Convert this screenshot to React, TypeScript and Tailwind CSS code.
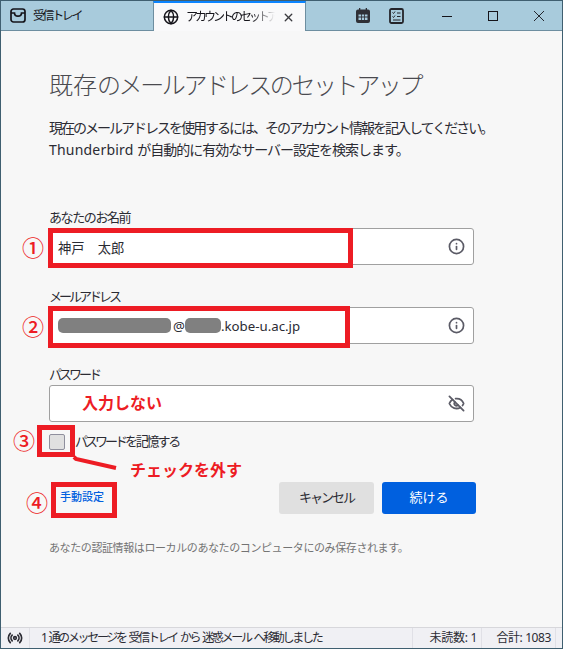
import { Info, EyeOff, X, Globe, Radio } from 'lucide-react';

const fontStack = "font-['Noto_Sans','Noto_Sans_CJK_JP',sans-serif]";

const InboxIcon = () => (
  <svg width="16" height="15" viewBox="0 0 16 15" fill="none" stroke="#15141a" strokeWidth="1.7">
    <rect x="1" y="1" width="14" height="13" rx="2.500" />
    <path d="M1 5h3.500c0 2 1.400 3.200 3.500 3.200S11.500 7 11.500 5H15" />
  </svg>
);

const CalendarIcon = () => (
  <svg width="14" height="15" viewBox="0 0 14 15" fill="#2f3036">
    <path d="M3 0h1.300v2H3zM9.700 0H11v2H9.700z" />
    <path fillRule="evenodd" d="M2 1.500h10A2 2 0 0 1 14 3.500v9.500a2 2 0 0 1-2 2H2a2 2 0 0 1-2-2V3.500a2 2 0 0 1 2-2zM2.500 6.500v2h2.500v-2zm3.300 0v2h2.400v-2zm3.200 0v2h2.500v-2zM2.500 9.500v2.500h2.500V9.500zm3.300 0v2.500h2.400V9.500zm3.200 0v2.500h2.500V9.500z" />
  </svg>
);

const TasksIcon = () => (
  <svg width="15" height="16" viewBox="0 0 15 16" fill="none" stroke="#24252a">
    <rect x="1" y="1" width="13" height="14" rx="1.500" strokeWidth="1.800" />
    <path d="M3.500 4.500l1 1 1.500-2M3.500 8.500l1 1 1.500-2M8 5h3.500M8 8.500h3.500M4 12h7.500" strokeWidth="1" />
  </svg>
);

const WinMin = () => (
  <svg width="10" height="10" viewBox="0 0 10 10" stroke="#15141a">
    <path d="M0 5.500h10" />
  </svg>
);

const WinMax = () => (
  <svg width="10" height="10" viewBox="0 0 10 10" fill="none" stroke="#15141a">
    <rect x="0.500" y="0.500" width="9" height="9" />
  </svg>
);

const WinClose = () => (
  <svg width="10" height="10" viewBox="0 0 10 10" stroke="#15141a" strokeWidth="0.900">
    <path d="M0 0l10 10M10 0L0 10" />
  </svg>
);

const Field = ({ label, children, icon }: { label: React.ReactNode; children?: React.ReactNode; icon: React.ReactNode }) => (
  <div>
    <div className="h-[20px] whitespace-nowrap text-[13px] leading-[19px] text-[#2b2b33]">{label}</div>
    <div className="flex h-[37px] items-center justify-between rounded-[3px] border border-[#a0a0a0] bg-white pl-[8px] pr-[8px]">
      <div className="flex items-center text-[13.250px] text-[#2b2b33]">{children}</div>
      {icon}
    </div>
  </div>
);

export default function App() {
  return (
    <div className={`relative flex h-[649px] w-[563px] flex-col overflow-hidden border border-[#3f5f70] bg-[#f7f7f7] ${fontStack}`}>
      {/* tab bar */}
      <div className="flex h-[30px] shrink-0 items-stretch border-b border-[#6d8ea0] bg-[#a8cbdc]">
        <div className="flex w-[152px] items-center pl-[9px] text-[12px] text-[#15141a]">
          <InboxIcon />
          <span className="ml-[7px] tracking-[-2.400px]">受信トレイ</span>
        </div>
        <div className="-mb-px flex w-[153px] items-center border-x border-t-2 border-x-[#6d8ea0] border-t-[#0a84ff] bg-[#f9f9fa] pl-[9px] text-[12px] text-[#15141a]">
          <Globe size={16} strokeWidth={2.200} className="shrink-0" />
          <span className="ml-[7px] w-[89px] overflow-hidden whitespace-nowrap tracking-[-3px] [mask-image:linear-gradient(to_right,black_75%,transparent)]">
            アカウントのセットアップ
          </span>
          <X size={13} strokeWidth={2.500} className="ml-[7px] shrink-0 text-[#3a3a3f]" />
        </div>
        <div className="flex flex-1 items-center pl-[50px]">
          <CalendarIcon />
          <div className="ml-[19px]">
            <TasksIcon />
          </div>
          <div className="ml-[38px] flex items-center gap-[36px]">
            <WinMin />
            <WinMax />
            <WinClose />
          </div>
        </div>
      </div>

      {/* account setup form */}
      <main className="flex-1 pl-[48px] pr-[88px]">
        <h1 className="mt-[37px] whitespace-nowrap text-[24px] leading-[34px] font-light text-[#4a4a4f]">
          既存<span className="tracking-[-2.400px]">のメールアドレスのセットアップ</span>
        </h1>
        <p className="mt-[15px] whitespace-nowrap text-[14px] leading-[22px] text-[#2b2b33]">
          <span className="tracking-[-2px]">現在のメールアドレスを使用するには、そのアカウント情報を記入してください。</span>
          <br />
          <span className="tracking-[0.200px]">Thunderbird</span>{' '}
          <span className="tracking-[-1px]">が自動的に有効なサーバー設定を検索します。</span>
        </p>

        <div className="mt-[47px] flex flex-col gap-[21.500px]">
          <Field
            label={<span className="tracking-[-1.400px]">あなたのお名前</span>}
            icon={<Info size={17} strokeWidth={2.400} className="text-[#5b5b66]" />}
          >
            <span className="mt-[5px]">神戸　太郎</span>
          </Field>
          <Field
            label={<span className="tracking-[-3px]">メールアドレス</span>}
            icon={<Info size={17} strokeWidth={2.400} className="text-[#5b5b66]" />}
          >
            <span className="h-[15px] w-[113px] rounded-[5px] bg-[#808080]" />
            <span className="ml-[2px] mt-[3px]">@</span>
            <span className="h-[15px] w-[36px] rounded-[5px] bg-[#808080]" />
            <span className="mt-[3px]">.kobe-u.ac.jp</span>
          </Field>
          <Field
            label={<span className="tracking-[-3px]">パスワード</span>}
            icon={<EyeOff size={17} strokeWidth={2.500} className="text-[#5b5b66]" />}
          />
        </div>

        <div className="mt-[10px] flex items-center">
          <div className="h-[16px] w-[16px] rounded-[2px] border border-[#8f8f9d] bg-[#e0e0e0]" />
          <span className="ml-[10px] text-[13px] text-[#2b2b33]">
            <span className="tracking-[-3px]">パスワード</span>
            <span className="tracking-[-2.200px]">を記憶する</span>
          </span>
        </div>

        <div className="-mr-[2px] mt-[30px] flex items-center justify-between">
          <span className="ml-[11px] text-[11px] font-medium text-[#0060df]">手動設定</span>
          <div className="flex gap-[8px]">
            <button className="h-[32px] w-[95px] rounded-[3px] bg-[#e0e0e0] text-[13px] tracking-[-2px] text-[#2b2b33]">キャンセル</button>
            <button className="h-[32px] w-[94px] rounded-[3px] bg-[#0060df] text-[13px] text-white">続ける</button>
          </div>
        </div>

        <p className="mt-[26px] whitespace-nowrap text-[11px] tracking-[-0.400px] text-[#737373]">
          あなたの認証情報はローカルのあなたのコンピュータにのみ保存されます。
        </p>
      </main>

      {/* status bar */}
      <div className="flex h-[21px] shrink-0 items-center border-t border-[#d7d7db] bg-[#f0f0f4] text-[12px] text-[#2b2b33]">
        <div className="flex w-[28px] justify-center">
          <Radio size={16} strokeWidth={2.500} />
        </div>
        <div className="flex h-full w-[383px] items-center whitespace-nowrap border-l border-[#e0e0e6] pl-[11px] tracking-[-2.300px] [word-spacing:2px]">
          1 通のメッセージを 受信トレイ から 迷惑メール へ移動しました
        </div>
        <div className="flex h-full w-[69px] items-center justify-end whitespace-nowrap border-l border-[#e0e0e6] pr-[4px] tracking-[-0.300px]">未読数: 1</div>
        <div className="flex h-full w-[75px] items-center justify-end whitespace-nowrap border-x border-[#e0e0e6] pr-[4px] tracking-[-0.400px]">合計: 1083</div>
      </div>

      {/* red annotations drawn over the screenshot */}
      <div className="absolute left-[47px] top-[227px] h-[40px] w-[305px] border-[5px] border-[#ed1c24]" />
      <div className="absolute left-[47px] top-[305px] h-[42px] w-[302px] border-[5px] border-[#ed1c24]" />
      <div className="absolute left-[36px] top-[424px] h-[32px] w-[38px] border-[5px] border-[#ed1c24]" />
      <div className="absolute left-[50px] top-[481px] h-[36px] w-[66px] border-[5px] border-[#ed1c24]" />
      <svg className="absolute left-[60px] top-[450px]" width="70" height="24">
        <path d="M13 6 L15 8 L55 17" stroke="#ed1c24" strokeWidth="4" fill="none" />
      </svg>
      <span className="absolute left-[21px] top-[231px] text-[22px] leading-[30px] font-medium text-[#ed1c24]">①</span>
      <span className="absolute left-[21px] top-[310px] text-[22px] leading-[30px] font-medium text-[#ed1c24]">②</span>
      <span className="absolute left-[12px] top-[424px] text-[22px] leading-[30px] font-medium text-[#ed1c24]">③</span>
      <span className="absolute left-[25px] top-[486px] text-[22px] leading-[30px] font-medium text-[#ed1c24]">④</span>
      <span className="absolute left-[81px] top-[391px] text-[16px] leading-[22px] font-bold text-[#ed1c24]">入力しない</span>
      <span className="absolute left-[129px] top-[458px] text-[16px] leading-[22px] font-bold text-[#ed1c24]">チェックを外す</span>
    </div>
  );
}
